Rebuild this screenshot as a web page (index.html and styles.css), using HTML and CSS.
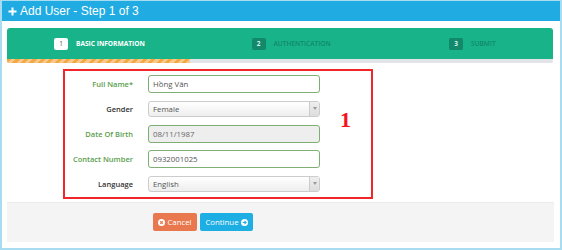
FILE: index.html
```html
<!DOCTYPE html>
<html>
<head>
<meta charset="utf-8">
<link rel="stylesheet" href="styles.css">
</head>
<body>
<div class="panel">
  <div class="panel-head">
    <svg class="plus" width="9" height="9" viewBox="0 0 9 9"><path d="M4.5 0.5v8M0.5 4.5h8" stroke="#fff" stroke-width="2"/></svg>
    <span>Add User - Step 1 of 3</span>
  </div>
  <div class="panel-body">
    <div class="wizard">
      <div class="steps">
        <div class="step active"><span class="badge">1</span><span class="step-label">BASIC INFORMATION</span></div>
        <div class="step"><span class="badge">2</span><span class="step-label">AUTHENTICATION</span></div>
        <div class="step"><span class="badge">3</span><span class="step-label">SUBMIT</span></div>
      </div>
      <div class="progress"><div class="progress-fill" style="width:33.5%"></div></div>
    </div>
    <div class="red-box">
      <div class="form">
        <label class="lbl green">Full Name*</label>
        <div class="row-ctl"><input class="input" type="text" value="Hồng Vân"></div>
        <label class="lbl">Gender</label>
        <div class="row-ctl"><div class="select"><span class="sel-text">Female</span><span class="sel-arrow"><i></i></span></div></div>
        <label class="lbl green">Date Of Birth</label>
        <div class="row-ctl"><input class="input disabled" type="text" value="08/11/1987" disabled></div>
        <label class="lbl green">Contact Number</label>
        <div class="row-ctl"><input class="input" type="text" value="0932001025"></div>
        <label class="lbl">Language</label>
        <div class="row-ctl"><div class="select"><span class="sel-text">English</span><span class="sel-arrow"><i></i></span></div></div>
      </div>
      <div class="mark">1</div>
    </div>
    <div class="actions">
      <button class="btn btn-cancel"><svg width="7" height="7" viewBox="0 0 10 10"><circle cx="5" cy="5" r="5" fill="#fff"/><path d="M3.2 3.2l3.6 3.6M6.8 3.2l-3.6 3.6" stroke="#e9784e" stroke-width="1.6"/></svg>Cancel</button>
      <button class="btn btn-continue">Continue<svg width="7" height="7" viewBox="0 0 10 10"><circle cx="5" cy="5" r="5" fill="#fff"/><path d="M2.5 5h4.5M5 2.8l2.2 2.2L5 7.2" stroke="#1daee3" stroke-width="1.5" fill="none"/></svg></button>
    </div>
  </div>
</div>
</body>
</html>
```

FILE: styles.css
```css
* { box-sizing: border-box; }
html, body { margin: 0; padding: 0; background: #fff; }
body { font-family: "Open Sans", "Liberation Sans", sans-serif; }

.panel {
  width: 562px;
  height: 250px;
  border: 2px solid #a8dcf0;
  border-top-width: 1px;
  display: flex;
  flex-direction: column;
}
.panel-head {
  height: 20px;
  background: #20abe2;
  color: #fff;
  font-family: "Liberation Sans", Arial, sans-serif;
  font-size: 12px;
  display: flex;
  align-items: center;
  padding-left: 6px;
  gap: 3px;
}
.panel-head .plus { margin-top: 1px; }
.panel-body {
  flex: 1;
  padding: 7px 5px 5px 5px;
  display: flex;
  flex-direction: column;
}
.wizard {
  width: 546px;
}
.steps {
  height: 31px;
  background: #19b38a;
  border-radius: 3px 3px 0 0;
  display: flex;
  align-items: center;
  padding-left: 47px;
}
.step {
  flex: none;
  width: 197.5px;
  display: flex;
  align-items: center;
  gap: 8px;
  font-size: 6.6px;
  font-weight: 600;
  color: #0f8a67;
}
.step:last-child { width: auto; }
.step .badge {
  width: 14px;
  height: 12px;
  border-radius: 2px;
  background: #11896a;
  color: #d8f2ea;
  display: flex;
  align-items: center;
  justify-content: center;
  font-size: 6.5px;
  font-weight: 700;
}
.step.active { color: #fff; font-weight: 700; }
.step.active .badge { background: #fff; color: #555; font-weight: 400; }
.progress {
  height: 4px;
  background: #e2e4ea;
  border-radius: 0 0 2px 2px;
  overflow: hidden;
}
.progress-fill {
  height: 100%;
  background: repeating-linear-gradient(-45deg, #f8c888 0 3px, #f3a846 3px 6px);
}

.red-box {
  margin: 6px 0 0 56px;
  width: 310px;
  height: 130px;
  border: 2px solid #f0262b;
  display: flex;
  align-items: flex-start;
}
.form {
  display: grid;
  grid-template-columns: 68px 172px;
  grid-auto-rows: 25px;
  column-gap: 15px;
}
.lbl {
  font-size: 7.5px;
  font-weight: 600;
  color: #333;
  text-align: right;
  align-self: center;
}
.lbl.green { color: #5a9e4c; }
.row-ctl { display: flex; align-items: center; }
.input {
  width: 172px;
  height: 18px;
  border: 1px solid #7fae72;
  border-radius: 3px;
  padding: 0 4px;
  font-family: "Open Sans", sans-serif;
  font-size: 7.8px;
  color: #555;
  background: #fff;
  outline: none;
}
.input.disabled { background: #eeeeee; color: #666; }
.select {
  width: 172px;
  height: 16px;
  border: 1px solid #ccc;
  border-radius: 3px;
  background: linear-gradient(#ffffff, #eeeeee);
  display: flex;
  align-items: center;
  font-size: 7.8px;
  color: #555;
}
.sel-text { flex: 1; padding-left: 4px; }
.sel-arrow {
  width: 10px;
  height: 100%;
  border-left: 1px solid #ccc;
  background: linear-gradient(#eee, #ddd);
  display: flex;
  align-items: center;
  justify-content: center;
}
.sel-arrow i {
  width: 0; height: 0;
  border-left: 2px solid transparent;
  border-right: 2px solid transparent;
  border-top: 3px solid #999;
}
.mark {
  margin: 38px 0 0 20px;
  font-family: "Liberation Serif", "Times New Roman", serif;
  font-weight: 700;
  font-size: 22px;
  line-height: 22px;
  color: #f5121c;
}

.actions {
  margin-top: 3px;
  width: 547px;
  height: 40px;
  background: #f4f4f4;
  border-top: 1px solid #ebebeb;
  display: flex;
  align-items: flex-start;
  gap: 3px;
  padding: 10px 0 0 146px;
}
.btn {
  height: 18px;
  border: 0;
  border-radius: 2px;
  color: #fff;
  font-family: "Open Sans", sans-serif;
  font-size: 7.8px;
  display: flex;
  align-items: center;
  justify-content: center;
  gap: 2px;
  padding: 0;
}
.btn-cancel { width: 44px; background: #e9784e; }
.btn-continue { width: 53px; background: #1daee3; }
```
